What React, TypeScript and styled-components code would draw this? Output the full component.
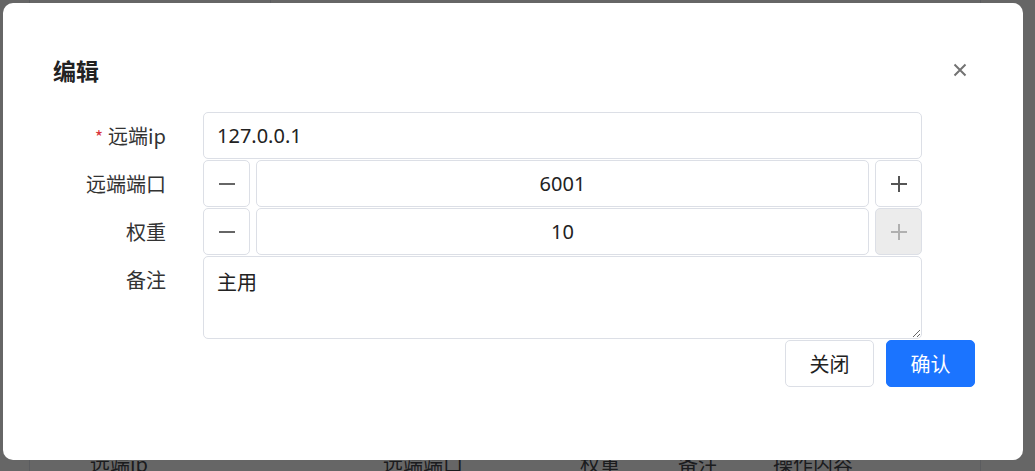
import styled, { createGlobalStyle } from 'styled-components';

const GlobalStyle = createGlobalStyle`
  html, body {
    margin: 0;
    padding: 0;
    background: #ffffff;
    font-family: "Noto Sans", "Noto Sans CJK SC", sans-serif;
    overflow: hidden;
  }
  * { box-sizing: border-box; }
`;

const columns = ['远端ip', '远端端口', '权重', '备注', '操作内容'];

const App: React.FC = () => {
  return (
    <>
      <GlobalStyle />
      <Page>
        <Card>
          <SearchArea />
          <TableHead>
            <span />
            {columns.map((c) => (
              <HeadCell key={c}>{c}</HeadCell>
            ))}
          </TableHead>
        </Card>
      </Page>

      <Overlay>
        <Dialog>
          <Header>
            <Title>编辑</Title>
            <CloseButton aria-label="close">
              <svg width="14" height="14" viewBox="0 0 14 14">
                <path d="M1.5 1.5 L12.5 12.5 M12.5 1.5 L1.5 12.5" stroke="#737373" strokeWidth="2" />
              </svg>
            </CloseButton>
          </Header>

          <Form>
            <Label>
              <Required>*</Required>远端ip
            </Label>
            <TextInput defaultValue="127.0.0.1" />

            <Label>远端端口</Label>
            <NumberInput value="6001" />

            <Label>权重</Label>
            <NumberInput value="10" plusDisabled />

            <Label $top>备注</Label>
            <TextArea defaultValue="主用" />
          </Form>

          <Footer>
            <Button>关闭</Button>
            <Button $primary>确认</Button>
          </Footer>
        </Dialog>
      </Overlay>
    </>
  );
};

export default App;

const NumberInput: React.FC<{ value: string; plusDisabled?: boolean }> = ({ value, plusDisabled }) => (
  <Stepper>
    <StepButton>
      <svg width="16" height="16" viewBox="0 0 16 16">
        <path d="M0 8 H16" stroke="#666" strokeWidth="2" />
      </svg>
    </StepButton>
    <NumberField defaultValue={value} />
    <StepButton $disabled={plusDisabled}>
      <svg width="16" height="16" viewBox="0 0 16 16">
        <path d="M0 8 H16 M8 0 V16" stroke={plusDisabled ? '#b0b0b0' : '#555'} strokeWidth="2" />
      </svg>
    </StepButton>
  </Stepper>
);

const Page = styled.div`
  height: 471px;
  padding-left: 29px;
`;

const Card = styled.div`
  width: 952px;
  height: 100%;
  border-left: 1px solid #e4e7ed;
  border-right: 1px solid #e4e7ed;
  background: #fff;
`;

const SearchArea = styled.div`
  margin-left: 240px;
  border-left: 1px solid #e4e7ed;
  height: 4px;
  margin-bottom: 444px;
`;

const TableHead = styled.div`
  display: grid;
  grid-template-columns: 60px 293px 197px 98px 95px 1fr;
  height: 30px;
  align-items: center;
  color: #45474d;
  font-size: 20px;
  font-family: "Noto Sans CJK SC", sans-serif;
`;

const HeadCell = styled.span`
  white-space: nowrap;
`;

const Overlay = styled.div`
  position: fixed;
  inset: 0;
  background: rgba(0, 0, 0, 0.6);
  padding: 3px;
`;

const Dialog = styled.div`
  width: 1020px;
  height: 457px;
  background: #fff;
  border-radius: 10px;
  padding: 51px 48px 0 50px;
  display: flex;
  flex-direction: column;
`;

const Header = styled.div`
  display: flex;
  align-items: center;
  justify-content: space-between;
  height: 32px;
  margin-bottom: 26px;
`;

const Title = styled.h2`
  margin: 0;
  font-size: 23px;
  font-weight: 700;
  color: #222;
  font-family: "Noto Sans CJK SC", sans-serif;
  line-height: 32px;
`;

const CloseButton = styled.button`
  border: none;
  background: none;
  padding: 0;
  margin-right: 5px;
  width: 20px;
  height: 20px;
  display: flex;
  align-items: center;
  justify-content: center;
  cursor: pointer;
`;

const Form = styled.div`
  display: grid;
  grid-template-columns: 150px 719px;
  row-gap: 1px;
  font-family: "Noto Sans", "Noto Sans CJK SC", sans-serif;
`;

const Label = styled.label<{ $top?: boolean }>`
  display: flex;
  align-items: ${({ $top }) => ($top ? 'flex-start' : 'center')};
  justify-content: flex-end;
  padding-right: 37px;
  padding-top: ${({ $top }) => ($top ? '9px' : '0')};
  font-size: 20px;
  color: #333;
  font-family: "Noto Sans CJK SC", sans-serif;
  line-height: 30px;
  height: 47px;
`;

const Required = styled.span`
  color: #d9363e;
  margin-right: 5px;
  font-size: 18px;
`;

const fieldBase = `
  border: 1px solid #dcdfe6;
  border-radius: 5px;
  background: #fff;
  font-size: 20px;
  color: #222;
  font-family: "Noto Sans", "Noto Sans CJK SC", sans-serif;
  outline: none;
`;

const TextInput = styled.input`
  ${fieldBase}
  height: 47px;
  width: 100%;
  padding: 0 13px;
`;

const Stepper = styled.div`
  display: flex;
  gap: 6px;
  height: 47px;
`;

const StepButton = styled.button<{ $disabled?: boolean }>`
  border: 1px solid #dcdfe6;
  border-radius: 5px;
  background: ${({ $disabled }) => ($disabled ? '#ececec' : '#fff')};
  width: 47px;
  flex: none;
  padding: 0;
  display: flex;
  align-items: center;
  justify-content: center;
  cursor: ${({ $disabled }) => ($disabled ? 'not-allowed' : 'pointer')};
`;

const NumberField = styled.input`
  ${fieldBase}
  flex: 1;
  min-width: 0;
  text-align: center;
`;

const TextArea = styled.textarea`
  ${fieldBase}
  width: 100%;
  height: 83px;
  padding: 10px 13px;
  line-height: 30px;
  resize: vertical;
  font-family: "Noto Sans CJK SC", sans-serif;
`;

const Footer = styled.div`
  display: flex;
  justify-content: flex-end;
  gap: 12px;
  margin-top: 1px;
`;

const Button = styled.button<{ $primary?: boolean }>`
  width: 89px;
  height: 47px;
  border-radius: 5px;
  font-size: 20px;
  font-family: "Noto Sans CJK SC", sans-serif;
  cursor: pointer;
  ${({ $primary }) =>
    $primary
      ? `
    background: #1b74ff;
    border: 1px solid #1b74ff;
    color: #fff;
  `
      : `
    background: #fff;
    border: 1px solid #dcdfe6;
    color: #222;
  `}
`;
